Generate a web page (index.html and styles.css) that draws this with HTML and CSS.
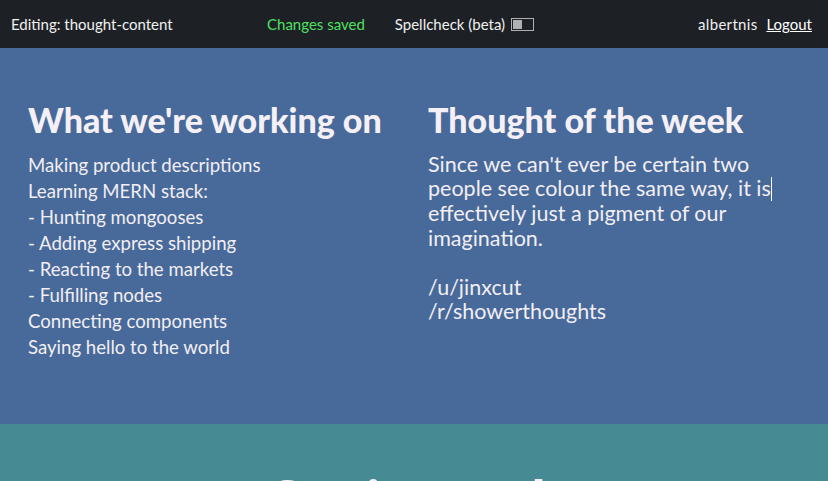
FILE: index.html
```html
<!DOCTYPE html>
<html lang="en">
<head>
<meta charset="utf-8">
<title>Editing: thought-content</title>
<link rel="stylesheet" href="styles.css">
</head>
<body>
<header class="topbar">
  <div class="topbar-left">Editing: thought-content</div>
  <div class="topbar-center">
    <span class="saved">Changes saved</span>
    <span class="spell">Spellcheck (beta) <span class="toggle"><span class="knob"></span></span></span>
  </div>
  <div class="topbar-right">
    <span class="user">albertnis</span>
    <a class="logout" href="#">Logout</a>
  </div>
</header>
<main class="hero">
  <section class="col">
    <h2 class="col-title">What we're working on</h2>
    <div class="list">
      <div>Making product descriptions</div>
      <div>Learning MERN stack:</div>
      <div>- Hunting mongooses</div>
      <div>- Adding express shipping</div>
      <div>- Reacting to the markets</div>
      <div>- Fulfilling nodes</div>
      <div>Connecting components</div>
      <div>Saying hello to the world</div>
    </div>
  </section>
  <section class="col">
    <h2 class="col-title">Thought of the week</h2>
    <div class="thought">Since we can't ever be certain two<br>people see colour the same way, it is<span class="caret"></span><br>effectively just a pigment of our<br>imagination.<br><br>/u/jinxcut<br>/r/showerthoughts</div>
  </section>
</main>
<section class="contact">
  <h2 class="contact-title">Get in touch</h2>
</section>
</body>
</html>
```
FILE: styles.css
```css
html, body {
  margin: 0;
  padding: 0;
}
body {
  font-family: "Lato", "Noto Sans", sans-serif;
  color: #f3eef3;
  background: #468a94;
  overflow: hidden;
}
.topbar {
  height: 48px;
  background: #1d2025;
  display: flex;
  align-items: center;
  padding: 0 16px 0 11px;
  font-size: 15px;
  color: #f0f0f0;
}
.topbar-left {
  width: 256px;
}
.topbar-center {
  display: flex;
  align-items: center;
  gap: 30px;
  flex: 1;
}
.saved {
  color: #4fe062;
}
.spell {
  display: inline-flex;
  align-items: center;
  gap: 6px;
}
.toggle {
  width: 19px;
  height: 9px;
  border: 1px solid #b0b0b4;
  display: inline-flex;
  align-items: center;
  padding: 1px;
}
.knob {
  width: 9px;
  height: 9px;
  background: #b0b0b4;
}
.topbar-right {
  display: flex;
  gap: 9px;
  align-items: center;
}
.user {
  letter-spacing: 0.3px;
}
.logout {
  color: #fff;
  text-decoration: underline;
}
.hero {
  background: #476a9a;
  display: grid;
  grid-template-columns: 400px 400px;
  padding: 52px 0 0 28px;
  height: 324px;
}
.col-title {
  font-family: "Lato", sans-serif;
  font-weight: 900;
  font-size: 34px;
  line-height: 40px;
  margin: 0 0 12px;
  color: #f5f0f5;
}
.list {
  font-size: 18.6px;
  line-height: 26px;
}
.thought {
  font-size: 21.5px;
  line-height: 24.4px;
  margin-top: 2px;
}
.caret {
  display: inline-block;
  width: 1px;
  height: 24px;
  background: #fff;
  vertical-align: -5px;
}
.contact {
  height: 60px;
  padding-top: 45px;
}
.contact-title {
  margin: 0;
  text-align: center;
  font-family: "Lato", sans-serif;
  font-weight: 900;
  font-size: 54px;
  line-height: 60px;
  color: #f5f0f5;
}
```
